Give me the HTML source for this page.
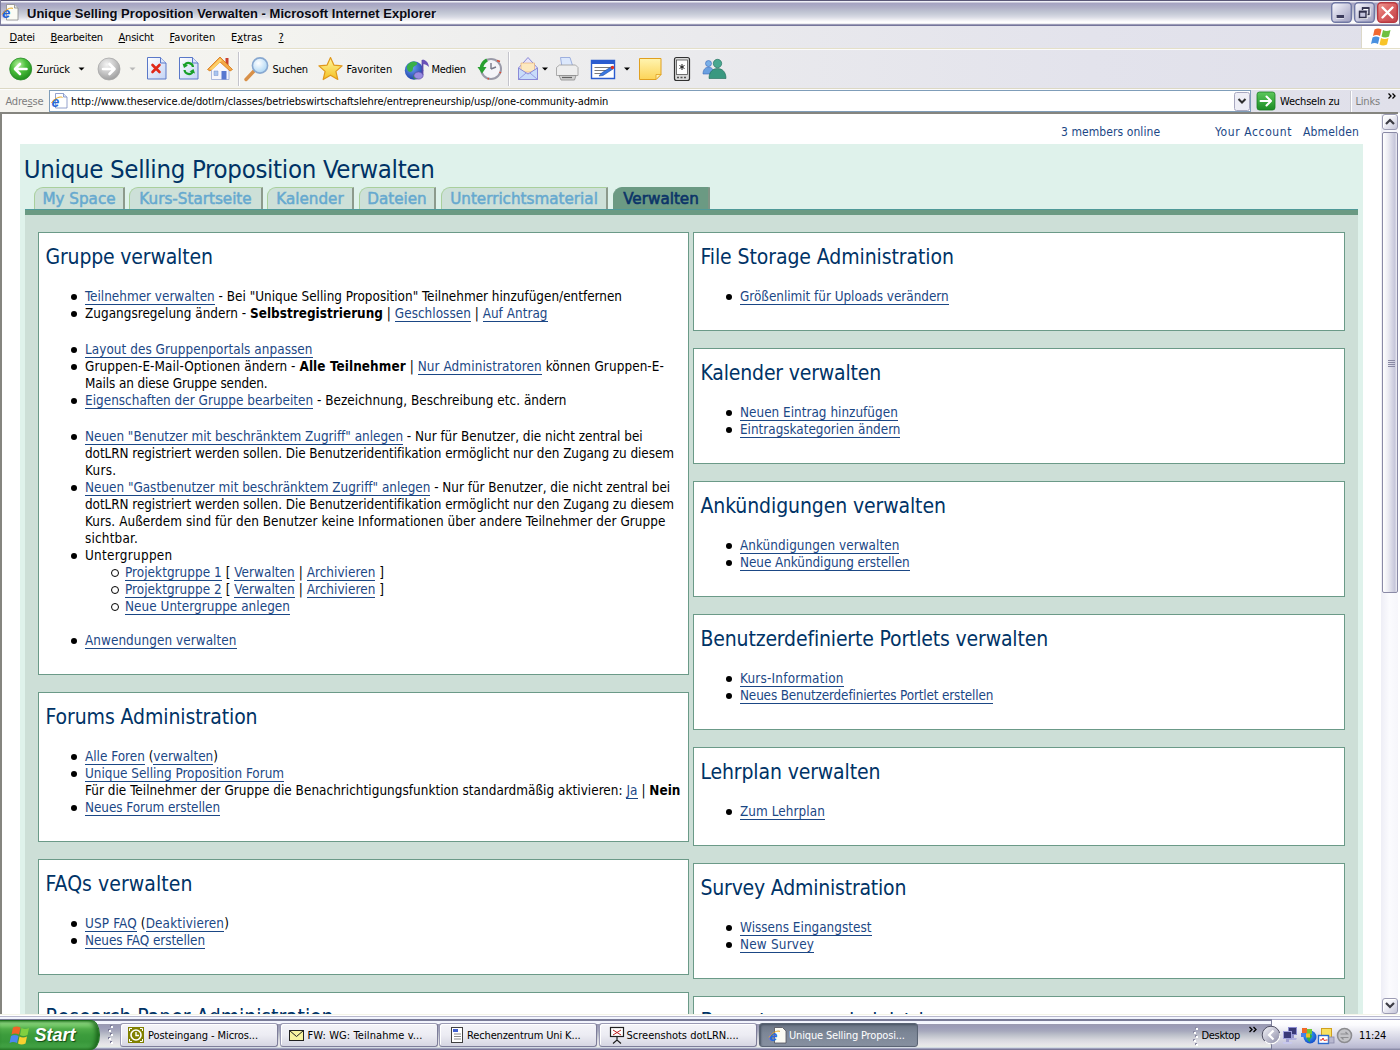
<!DOCTYPE html>
<html lang="de">
<head>
<meta charset="utf-8">
<title>Unique Selling Proposition Verwalten - Microsoft Internet Explorer</title>
<style>
*{box-sizing:border-box}
html,body{margin:0;padding:0}
body{width:1400px;height:1050px;overflow:hidden;position:relative;background:#fff;font-family:"DejaVu Sans Condensed","Liberation Sans",sans-serif;font-size:11px;color:#000}
/* ---------- window chrome ---------- */
.ui{font-family:"DejaVu Sans Condensed","Liberation Sans",sans-serif;font-size:11px;letter-spacing:-.2px;white-space:nowrap;color:#000}
#titlebar{position:absolute;left:0;top:0;width:1400px;height:26px;box-shadow:inset 1px 0 0 #7c7c9c,inset -1px 0 0 #7c7c9c;background:linear-gradient(#5a5878 0,#5a5878 1px,#f0f0f8 1px,#eeeef6 2px,#c4c4d6 2.6px,#a6a4c2 3.5px,#a8a8c4 5px,#b2b2c8 8px,#bcc0d0 11px,#c8ccd8 14px,#d8dae4 17px,#e8e8ee 19px,#f8f8fa 21px,#ffffff 22px,#ffffff 23px,#dcdce2 24px,#9c9cb8 24.500px,#74749a 25px,#74749a 26px)}
#titlebar .t{position:absolute;left:27px;top:5.5px;font:bold 13px/16px "Liberation Sans",sans-serif;color:#0a0a14;white-space:nowrap;letter-spacing:.015px;text-shadow:1px 1px 0 rgba(255,255,255,.5)}
#rebar{position:absolute;left:0;top:26px;width:1400px;height:87px;background:linear-gradient(90deg,#f5f4ef 0,#f3f3ef 20%,#eaeaed 50%,#e3e3ec 78%,#e0e0ea 100%)}
#rebar .mline{position:absolute;left:0;top:22px;width:1400px;height:2px;background:linear-gradient(#e4dfc8 0,#e4dfc8 1px,#fcfcfd 1px,#fcfcfd 2px)}
#rebar .tline{position:absolute;left:0;top:62px;width:1400px;height:2px;background:linear-gradient(#dcd8c4 0,#dcd8c4 1px,#fcfcfd 1px,#fcfcfd 2px)}
#menubar span{position:absolute;top:31px}
#toolbar .lbl{position:absolute;top:63px}
#topicons svg,#taskbar svg{position:absolute;overflow:visible}
#addr .lbl{position:absolute;top:95px}
#addrbox{position:absolute;left:49px;top:90px;width:1202px;height:22px;background:#fff;border:1px solid #7f9db9}
/* ---------- page ---------- */
#view{position:absolute;left:0;top:112px;width:1398px;height:902px;background:#fff;overflow:hidden;border-top:2px solid #85857f}
#view .edgeL{position:absolute;left:0;top:0;width:2px;height:903px;background:#85857f}
#page{position:absolute;left:0;top:0;width:1382px;height:920px;font-family:"DejaVu Sans Condensed","Liberation Sans",sans-serif;font-size:13.4px;line-height:17px;color:#000}
#hdr a{position:absolute;top:10px;font-size:12px;color:#1b4785;white-space:nowrap}
#lt{position:absolute;left:20px;top:30px;width:1343px;height:900px;background:#dff2eb}
#ptitle{position:absolute;left:23.8px;top:38.9px;font-size:25.6px;letter-spacing:-.33px;line-height:32px;color:#003366;white-space:nowrap}
.tab{position:absolute;top:72.5px;height:23.5px;-webkit-text-stroke:.5px #66a9cf;background:#cde0d8;border-left:1px solid #a9cf9c;border-top:1px solid #a9cf9c;border-right:2px solid #8c9a8c;border-radius:9px 0 0 0;font-family:"DejaVu Sans","Liberation Sans",sans-serif;font-size:15.2px;line-height:22.5px;color:#66a9cf;text-align:center;white-space:nowrap}
.tab.on{background:#6b9a83;color:#0b3468;border-color:#6b9a83;border-right-color:#7f9384;font-weight:normal;-webkit-text-stroke:.6px #0b3468}
#bar{position:absolute;left:25px;top:95px;width:1333px;height:6px;background:#6b9a83;border-top:1px solid #4f9a98}
#mid{position:absolute;left:25px;top:101px;width:1333px;height:820px;background:#cddfd7}
.box{position:absolute;background:#fff;border:1px solid #6b9a88}
.box h2{position:absolute;left:6.5px;top:11px;margin:0;font-weight:normal;font-size:21px;line-height:26px;color:#003366;white-space:nowrap}
.box ul{position:absolute;left:46px;top:55px;margin:0;padding:0;list-style:none;white-space:nowrap}
.box li{position:relative;margin:0;padding:0}
.box li:before{content:"";position:absolute;left:-14px;top:6px;width:6px;height:6px;border-radius:3px;background:#000}
.box li li:before{left:-14px;top:5px;width:6px;height:6px;border-radius:4px;background:#fff;border:1px solid #000}
.box ul ul{position:static;margin:0 0 0 40px}
.box a{color:#1b4785;text-decoration:none;border-bottom:1px solid #1b4785;padding-bottom:0}
.gap{margin-top:19px !important}
.gap2{margin-top:17px !important}
/* ---------- scrollbar ---------- */
#sb{position:absolute;left:1381px;top:0;width:17px;height:900px;background:linear-gradient(90deg,#eeeef6,#fbfbfe 50%,#f6f6fb)}
#sb .b{position:absolute;left:1px;width:16px;height:16px;border:1px solid #9c9cb4;border-radius:3px;background:linear-gradient(135deg,#ffffff 0,#f2f2f8 40%,#c4c4d8 100%);box-shadow:inset 1px 1px 0 #fff}
#sb .th{position:absolute;left:1px;top:18px;width:16px;height:461px;border:1px solid #8a8aa6;border-radius:2px;background:linear-gradient(90deg,#ffffff 0,#ececf3 35%,#c6c6da 85%,#f0f0f6 100%)}
#sb .gr{position:absolute;left:5px;top:227px;width:7px;height:7px;background:repeating-linear-gradient(#8a8aa4 0,#8a8aa4 1px,transparent 1px,transparent 2px)}
#sb svg{position:absolute;left:0;top:0}
/* ---------- taskbar ---------- */
#taskbar{position:absolute;left:0;top:1014px;width:1400px;height:36px;background:linear-gradient(#f4f4e8 0,#f4f4e8 1px,#ffffff 1px,#ffffff 2px,#b8b8cc 2px,#b8b8cc 3px,#f6f8ff 3px,#eef0fb 5px,#7a7c98 5.5px,#7a7c98 6.5px,#f0f2fc 7px,#f6f8ff 9.5px,#9a9ab2 10.5px,#9c9cb8 13px,#a6a8bc 17px,#bcc0ca 21px,#d8d8de 26px,#e6e4e8 30px,#e8ece6 33px,#c0c8e0 34px,#7c7898 35px,#7c7898 36px)}
#tray{position:absolute;left:1271px;top:5px;width:129px;height:31px;border-left:1px solid #7a7c98;background:linear-gradient(#a8a8c8 0,#a8a8c8 1px,#ffffff 1px,#fbfbfe 6px,#e4e4ee 14px,#c8c8dc 24px,#b8b8d0 29px,#9090ac 30px,#8888a4 31px)}
#start{position:absolute;left:0;top:6px;width:100px;height:30px;border-radius:0 9px 9px 0/0 15px 15px 0;border-top:1px solid #1e701e;border-right:1px solid #1e701e;background:linear-gradient(#58b050 0,#8cd680 2px,#78cc6c 4px,#4eac48 8px,#3c9c3c 14px,#38983a 21px,#44a446 26px,#2e842e 30px);box-shadow:inset -3px 0 4px rgba(16,84,16,.75)}
#start b{position:absolute;left:34.5px;top:4px;font:italic bold 18px/20px "Liberation Sans",sans-serif;color:#fff;letter-spacing:0;text-shadow:1px 1px 1px rgba(0,40,0,.7)}
.tb{position:absolute;top:9px;width:158px;height:24px;border:1px solid #9a9ab4;border-right-color:#7e7e9a;border-bottom-color:#7e7e9a;border-radius:3px;background:linear-gradient(#f4f4f9 0,#ececf3 50%,#d6d6e2 100%);box-shadow:inset 1px 1px 0 #fff}
.tb span{position:absolute;left:27px;top:5px}
.tb.on span{left:29px}
.tb.on{background:linear-gradient(#6a7484 0,#7c8696 40%,#8690a0 100%);border-color:#5a6474;box-shadow:inset 1px 1px 2px #4a5464;color:#fff}
#taskbar .txt{position:absolute}
</style>
</head>
<body>
<div id="titlebar"><span class="t">Unique Selling Proposition Verwalten - Microsoft Internet Explorer</span>
</div>
<div id="rebar"><div class="mline"></div><div class="tline"></div></div>
<div id="menubar" class="ui">
<span style="left:9.5px"><u>D</u>atei</span>
<span style="left:50.5px"><u>B</u>earbeiten</span>
<span style="left:118.5px"><u>A</u>nsicht</span>
<span style="left:169.5px;letter-spacing:0"><u>F</u>avoriten</span>
<span style="left:231px;letter-spacing:0">E<u>x</u>tras</span>
<span style="left:278.5px"><u>?</u></span>
</div>
<div id="toolbar" class="ui">
<span class="lbl" style="left:36.5px">Zurück</span>
<span class="lbl" style="left:272.5px">Suchen</span>
<span class="lbl" style="left:346.5px;letter-spacing:0">Favoriten</span>
<span class="lbl" style="left:431.5px;letter-spacing:-.3px">Medien</span>
</div>
<div id="addr" class="ui">
<span class="lbl" style="left:5.5px;color:#7d7d7d">Adre<u>s</u>se</span>
<div id="addrbox"></div>
<span class="lbl" style="left:71px;letter-spacing:-.095px">http://www.theservice.de/dotlrn/classes/betriebswirtschaftslehre/entrepreneurship/usp//one-community-admin</span>
<span class="lbl" style="left:1280px">Wechseln zu</span>
<span class="lbl" style="left:1355.5px;color:#7d7d7d">Links</span>
</div>

<div id="topicons" style="position:absolute;left:0;top:0;width:1400px;height:113px"><svg style="left:0;top:0" width="1400" height="113" viewBox="0 0 1400 113">
<defs>
<radialGradient id="gGreen" cx="40%" cy="30%" r="75%"><stop offset="0" stop-color="#b8f0a0"/><stop offset=".45" stop-color="#4cc03c"/><stop offset="1" stop-color="#1c8a1c"/></radialGradient>
<radialGradient id="gGray" cx="40%" cy="30%" r="75%"><stop offset="0" stop-color="#f4f4f4"/><stop offset=".5" stop-color="#c8c8c8"/><stop offset="1" stop-color="#9a9a9a"/></radialGradient>
<linearGradient id="gPage" x1="0" y1="0" x2="1" y2="1"><stop offset="0" stop-color="#ffffff"/><stop offset="1" stop-color="#c4d4f4"/></linearGradient>
<radialGradient id="gLens" cx="40%" cy="35%" r="70%"><stop offset="0" stop-color="#ffffff"/><stop offset="1" stop-color="#a8d4f4"/></radialGradient>
<linearGradient id="gStar" x1="0" y1="0" x2="0" y2="1"><stop offset="0" stop-color="#fff8a0"/><stop offset="1" stop-color="#f4c020"/></linearGradient>
<radialGradient id="gGlobe" cx="40%" cy="35%" r="70%"><stop offset="0" stop-color="#6aa0f0"/><stop offset="1" stop-color="#1a3ca8"/></radialGradient>
<linearGradient id="gNote" x1="0" y1="0" x2="0" y2="1"><stop offset="0" stop-color="#fff4b0"/><stop offset="1" stop-color="#fcd458"/></linearGradient>
<linearGradient id="gGo" x1="0" y1="0" x2="0" y2="1"><stop offset="0" stop-color="#5cc85c"/><stop offset="1" stop-color="#1c8c24"/></linearGradient>
</defs>
<circle cx="20.7" cy="69" r="11" fill="url(#gGreen)" stroke="#2a8a2a" stroke-width=".8"/>
<path d="M26.5 69H15.5M20 64l-5 5 5 5" fill="none" stroke="#fff" stroke-width="2.6" stroke-linecap="round" stroke-linejoin="round"/>
<path d="M78.5 67.5h6l-3 3z" fill="#000"/>
<circle cx="109" cy="69" r="11" fill="url(#gGray)" stroke="#a8a8a8" stroke-width=".8"/>
<path d="M103 69h11M109.500 64l5 5-5 5" fill="none" stroke="#fff" stroke-width="2.6" stroke-linecap="round" stroke-linejoin="round"/>
<path d="M129.500 67.500h6l-3 3z" fill="#b8b8b8"/>
<path d="M147.500 57.500h13l5.500 5.500v16h-18.500z" fill="url(#gPage)" stroke="#5a78c8" stroke-width="1"/>
<path d="M160.500 57.500v5.500h5.500" fill="#dce6fa" stroke="#5a78c8" stroke-width="1"/>
<path d="M152.500 65l7 7M159.500 65l-7 7" stroke="#e02818" stroke-width="2.600" stroke-linecap="round"/>
<path d="M179.500 57.500h13l5.500 5.500v16h-18.500z" fill="url(#gPage)" stroke="#5a78c8" stroke-width="1"/>
<path d="M192.500 57.500v5.500h5.500" fill="#dce6fa" stroke="#5a78c8" stroke-width="1"/>
<path d="M193 67a4.500 4.500 0 0 0-8.500-1.500" fill="none" stroke="#18a028" stroke-width="2.200"/>
<path d="M182.500 63.500l1.500 4.500 4-2.500z" fill="#18a028"/>
<path d="M184.500 70a4.500 4.500 0 0 0 8.500 1.500" fill="none" stroke="#18a028" stroke-width="2.200"/>
<path d="M195 73.500l-1.500-4.500-4 2.500z" fill="#18a028"/>
<path d="M225.500 58h3v7h-3z" fill="#c84030"/>
<path d="M211.500 68.500l8.500-7.500 9 7.500v11h-17.500z" fill="#f6f6fc" stroke="#98a8d8" stroke-width=".8"/>
<path d="M207.500 69.500l12.500-12.500 12.500 12.500-2.500 1.500-10-9-10 9z" fill="#f4a848" stroke="#d88020" stroke-width=".9" stroke-linejoin="round"/>
<path d="M209.500 69l10.500-10.500 2 2-10 9.500z" fill="#fcd068"/>
<path d="M221.500 79.500v-8.500h5v8.500z" fill="#5878d0"/>
<path d="M214 71h4v4.500h-4z" fill="#a8c4f0" stroke="#7890c8" stroke-width=".5"/>
<path d="M254 71l-8 8.500" stroke="#d89048" stroke-width="3.400" stroke-linecap="round"/>
<circle cx="260" cy="65.500" r="7.600" fill="url(#gLens)" stroke="#88a8d0" stroke-width="1.600"/>
<path d="M330.500 57.500l3.400 7.600 8.200.8-6.200 5.500 1.900 8.100-7.300-4.300-7.300 4.300 1.900-8.100-6.200-5.500 8.200-.8z" fill="url(#gStar)" stroke="#e0981c" stroke-width="1.200" stroke-linejoin="round"/>
<circle cx="414" cy="70.500" r="9.200" fill="url(#gGlobe)"/>
<path d="M407 66c2-4 6-5.500 9-4s0 3.500-2 4.500 0 3.500-2.500 5-5-1.500-4.500-5.500z" fill="#38b048"/>
<path d="M413 76c1-3 5-4 7-2s-2 5.500-6 5z" fill="#30a040"/>
<path d="M422.500 60v15" stroke="#5a48a8" stroke-width="1.800"/>
<path d="M422.500 59.500c3.500.5 6 3 6.500 7.500-2-2-4-3-6.500-3z" fill="#6a50b8"/>
<ellipse cx="418.500" cy="75.500" rx="4.600" ry="3.600" fill="#9a8ce0" stroke="#5a48a8" stroke-width=".7"/>
<circle cx="491" cy="69" r="10" fill="#f4f4f8" stroke="#9a9aa8" stroke-width="2"/>
<path d="M491 69v-6M491 69l5-2" stroke="#787888" stroke-width="1.400" fill="none"/>
<path d="M497 60.500l3 1M499.500 72l1.500 1M488 78l.5 1.500" stroke="#e04830" stroke-width="1.400"/>
<path d="M487 60a10 10 0 0 0-5.500 8" fill="none" stroke="#28a030" stroke-width="3.600"/>
<path d="M477.500 67h9l-4.500 6.500z" fill="#28a030"/>
<path d="M518.500 68l9.500-10.500 9.500 10.500v11.500h-19z" fill="#e8e4fa" stroke="#8a8ad8" stroke-width="1"/>
<path d="M521 63h13.500v9h-13.500z" fill="#fce8c0" stroke="#e8a868" stroke-width=".6"/>
<path d="M518.500 68l9.500 6 9.500-6v11.500h-19z" fill="#c8dcfa" stroke="#8a8ad8" stroke-width="1"/>
<path d="M518.500 79.500l7.500-6.500M537.500 79.500l-7.500-6.500" stroke="#8a8ad8" stroke-width=".8"/>
<path d="M542 67.500h6l-3 3z" fill="#000"/>
<path d="M560.500 57.500h9.500l3 9.500h-11z" fill="#dce8fc" stroke="#8aa0d8" stroke-width=".8"/>
<path d="M556.500 67.500l3-2.500h16l2.500 2.500v8h-21.500z" fill="#eeeeee" stroke="#9a9a9a" stroke-width=".8"/>
<path d="M559 75.500h17l-1.500 4.500h-13.500z" fill="#d0d0d0" stroke="#8a8a8a" stroke-width=".8"/>
<path d="M562 77.500h10" stroke="#606060" stroke-width="1.200"/>
<path d="M591.500 60.500h23v18h-23z" fill="#fff" stroke="#2a5cd0" stroke-width="1.400"/>
<path d="M591.500 60.500h23v3.500h-23z" fill="#2a5cd0"/>
<path d="M594.500 67.500h16M594.500 70.500h16M594.500 73.500h9" stroke="#7a7a7a" stroke-width="1"/>
<path d="M599 76l2.500-3 10-6.500 1.500 2.500-10 6.500z" fill="#3a78e0" stroke="#2050a8" stroke-width=".6"/>
<circle cx="612.500" cy="67.500" r="1.700" fill="#e03020"/>
<path d="M624 67.500h6l-3 3z" fill="#000"/>
<path d="M639.500 58.500h21.500v16l-5 5h-16.500z" fill="url(#gNote)" stroke="#e0a020" stroke-width="1"/>
<path d="M661 74.500h-5v5z" fill="#fff0b0" stroke="#e0a020" stroke-width=".8"/>
<rect x="674.500" y="57.500" width="15" height="23" rx="2" fill="#d8d8d8" stroke="#303030" stroke-width="1.200"/>
<rect x="676.500" y="60" width="11" height="14.500" fill="#fff" stroke="#505050" stroke-width=".8"/>
<path d="M682 64v6M679.500 65.500l5 3M684.500 65.500l-5 3" stroke="#202020" stroke-width="1"/>
<path d="M677 77.500h10" stroke="#505050" stroke-width="1.600" stroke-dasharray="2 1.500"/>
<circle cx="708.500" cy="63.500" r="3" fill="#7ab0e8" stroke="#3a68b8" stroke-width=".6"/>
<path d="M703 74c0-5 3-7 5.500-7s5.500 2 5.500 7z" fill="#6aa0e0" stroke="#3a68b8" stroke-width=".6"/>
<circle cx="717.500" cy="63.500" r="4.200" fill="#48a890" stroke="#1c6858" stroke-width=".6"/>
<path d="M709 78.500c0-7 4-10 8.500-10s8.500 3 8.500 10z" fill="#3a9880" stroke="#1c6858" stroke-width=".6"/>
<path d="M55.500 93.500h8l3.500 3.500v11h-11.500z" fill="#fff" stroke="#7a8cc0" stroke-width=".8"/>
<path d="M63.500 93.500v3.500h3.500" fill="#dce6fa" stroke="#7a8cc0" stroke-width=".8"/>
<text x="51.500" y="107" font-family="Liberation Sans,sans-serif" font-weight="bold" font-style="italic" font-size="14" fill="#2868d8">e</text>
<path d="M51.500 103c3-5 9-7 11-5.500" fill="none" stroke="#e8a820" stroke-width="1"/>
<rect x="1234.500" y="92.500" width="15" height="18" rx="2" fill="#eeeef6" stroke="#a8a8c0" stroke-width="1"/>
<path d="M1238.500 99l3.500 3.500 3.500-3.500" fill="none" stroke="#303030" stroke-width="2"/>
<rect x="1257" y="92" width="18" height="18" rx="2.500" fill="url(#gGo)" stroke="#1c7c24" stroke-width=".8"/>
<path d="M1260.500 101h10M1266.500 96.500l4.500 4.500-4.500 4.500" fill="none" stroke="#fff" stroke-width="2" stroke-linecap="round" stroke-linejoin="round"/>
<path d="M1350.500 91v21" stroke="#c8c8d0" stroke-width="1"/><path d="M1351.500 91v21" stroke="#fff" stroke-width="1"/>
<path d="M1388.500 93.500l2.500 2.500-2.500 2.500M1392.500 93.500l2.500 2.500-2.500 2.500" fill="none" stroke="#000" stroke-width="1.300"/>
<path d="M238.500 52v34M508.500 52v34" stroke="#c4c4cc" stroke-width="1"/><path d="M239.500 52v34M509.500 52v34" stroke="#fff" stroke-width="1"/>
<rect x="1361" y="26" width="39" height="22" fill="#fff"/>
<path d="M1361.500 26v22" stroke="#dcd8c8" stroke-width="1"/>
<path d="M1374.500 29.500q3.500-2 7 0l-1.500 6.500q-3.500-2-7 0z" fill="#f06830"/>
<path d="M1383 30q3.500 2 7.500 0l-1.500 6.500q-4 2-7.500 0z" fill="#70c040"/>
<path d="M1372.500 37.500q3.500-2 7 0l-1.500 6.500q-3.500-2-7 0z" fill="#4890e0"/>
<path d="M1381 38q3.500 2 7.500 0l-1.500 6.500q-4 2-7.500 0z" fill="#f8c428"/>
<path d="M6.500 4.500h8l3.500 3.500v12h-11.500z" fill="#fbfbf4" stroke="#8a8a8a" stroke-width=".8"/>
<path d="M14.500 4.500v3.500h3.500" fill="#e4e4e4" stroke="#8a8a8a" stroke-width=".8"/>
<text x="2" y="18" font-family="Liberation Sans,sans-serif" font-weight="bold" font-style="italic" font-size="15" fill="#2060d8">e</text>
<path d="M2 14.500c3-5 9-7.500 11-6" fill="none" stroke="#e8a820" stroke-width="1"/>
<rect x="1331.700" y="2.700" width="19.600" height="19.600" rx="3.500" fill="url(#gWb)" stroke="#7078a4" stroke-width="1.400"/>
<rect x="1354.700" y="2.700" width="19.600" height="19.600" rx="3.500" fill="url(#gWb)" stroke="#7078a4" stroke-width="1.400"/>
<rect x="1377.700" y="2.700" width="19.600" height="19.600" rx="3.500" fill="url(#gWc)" stroke="#b83840" stroke-width="1.400"/>
<path d="M1336 15.500h8v3h-8z" fill="#fff"/><path d="M1336.500 15h7.500v3h-7.500z" fill="#3c3c5c"/>
<path d="M1362.500 8.500h6.500v6.500h-2" fill="none" stroke="#fff" stroke-width="1.400" transform="translate(.8 .8)"/>
<path d="M1362.500 10v-2h6.500v6.500h-2" fill="none" stroke="#30304c" stroke-width="1.400"/><path d="M1362 8h7" stroke="#30304c" stroke-width="1.600"/>
<path d="M1359.500 11.500h6.500v6h-6.500z" fill="none" stroke="#fff" stroke-width="1.400" transform="translate(.8 .8)"/>
<path d="M1359.500 11.500h6.500v6h-6.500z" fill="#c4c4dc" stroke="#30304c" stroke-width="1.400"/><path d="M1359 11.700h7.500" stroke="#30304c" stroke-width="1.800"/>
<path d="M1382.500 7.500l10 10M1392.500 7.500l-10 10" stroke="#fff" stroke-width="2.400" stroke-linecap="round"/>
<defs>
<linearGradient id="gWb" x1="0" y1="0" x2="1" y2="1"><stop offset="0" stop-color="#fafafe"/><stop offset=".45" stop-color="#d0d0e2"/><stop offset="1" stop-color="#9c9cbe"/></linearGradient>
<linearGradient id="gWc" x1="0" y1="0" x2="1" y2="1"><stop offset="0" stop-color="#f09c94"/><stop offset=".45" stop-color="#dc6464"/><stop offset="1" stop-color="#c04048"/></linearGradient>
</defs>
</svg>
</div>
<div id="view">
<div id="page">
<div id="hdr">
<a style="left:1061px;letter-spacing:.08px">3 members online</a>
<a style="left:1215px;letter-spacing:.6px">Your Account</a>
<a style="left:1303px;letter-spacing:.15px">Abmelden</a>
</div>
<div id="lt"></div>
<div id="ptitle">Unique Selling Proposition Verwalten</div>
<div class="tab" style="left:34px;width:91px">My Space</div>
<div class="tab" style="left:129px;width:134px">Kurs-Startseite</div>
<div class="tab" style="left:267px;width:87px">Kalender</div>
<div class="tab" style="left:359px;width:77px">Dateien</div>
<div class="tab" style="left:441px;width:167px">Unterrichtsmaterial</div>
<div class="tab on" style="left:613px;width:97px">Verwalten</div>
<div id="bar"></div>
<div id="mid"></div>
<div class="box" style="left:38px;top:118px;width:651px;height:443px">
<h2 style="letter-spacing:-0.166px">Gruppe verwalten</h2>
<ul>
<li><span class="l" style="letter-spacing:0.005px"><a>Teilnehmer verwalten</a> - Bei "Unique Selling Proposition" Teilnehmer hinzufügen/entfernen</span></li>
<li><span class="l" style="letter-spacing:0.035px">Zugangsregelung ändern - <b>Selbstregistrierung</b> | <a>Geschlossen</a> | <a>Auf Antrag</a></span></li>
<li class="gap"><span class="l" style="letter-spacing:0.062px"><a>Layout des Gruppenportals anpassen</a></span></li>
<li><span class="l" style="letter-spacing:0.096px">Gruppen-E-Mail-Optionen ändern - <b>Alle Teilnehmer</b> | <a>Nur Administratoren</a> können Gruppen-E-</span><br><span class="l" style="letter-spacing:-0.109px">Mails an diese Gruppe senden.</span></li>
<li><span class="l" style="letter-spacing:0.031px"><a>Eigenschaften der Gruppe bearbeiten</a> - Bezeichnung, Beschreibung etc. ändern</span></li>
<li class="gap"><span class="l" style="letter-spacing:-0.013px"><a>Neuen "Benutzer mit beschränktem Zugriff" anlegen</a> - Nur für Benutzer, die nicht zentral bei</span><br><span class="l" style="letter-spacing:-0.053px">dotLRN registriert werden sollen. Die Benutzeridentifikation ermöglicht nur den Zugang zu diesem</span><br><span class="l" style="letter-spacing:0.300px">Kurs.</span></li>
<li><span class="l" style="letter-spacing:-0.008px"><a>Neuen "Gastbenutzer mit beschränktem Zugriff" anlegen</a> - Nur für Benutzer, die nicht zentral bei</span><br><span class="l" style="letter-spacing:-0.053px">dotLRN registriert werden sollen. Die Benutzeridentifikation ermöglicht nur den Zugang zu diesem</span><br><span class="l" style="letter-spacing:0.066px">Kurs. Außerdem sind für den Benutzer keine Informationen über andere Teilnehmer der Gruppe</span><br><span class="l" style="letter-spacing:0.201px">sichtbar.</span></li>
<li><span class="l" style="letter-spacing:0.300px">Untergruppen</span>
<ul>
<li><span class="l" style="letter-spacing:0.056px"><a>Projektgruppe 1</a> [ <a>Verwalten</a> | <a>Archivieren</a> ]</span></li>
<li><span class="l" style="letter-spacing:0.056px"><a>Projektgruppe 2</a> [ <a>Verwalten</a> | <a>Archivieren</a> ]</span></li>
<li><span class="l" style="letter-spacing:0.047px"><a>Neue Untergruppe anlegen</a></span></li>
</ul>
</li>
<li class="gap2"><span class="l" style="letter-spacing:0.068px"><a>Anwendungen verwalten</a></span></li>
</ul>
</div>
<div class="box" style="left:38px;top:578px;width:651px;height:150px">
<h2 style="letter-spacing:-0.089px">Forums Administration</h2>
<ul>
<li><span class="l" style="letter-spacing:0.009px"><a>Alle Foren</a> (<a>verwalten</a>)</span></li>
<li><span class="l" style="letter-spacing:-0.009px"><a>Unique Selling Proposition Forum</a></span><br><span class="l" style="letter-spacing:0.042px">Für die Teilnehmer der Gruppe die Benachrichtigungsfunktion standardmäßig aktivieren: <a>Ja</a> | <b>Nein</b></span></li>
<li><span class="l" style="letter-spacing:-0.051px"><a>Neues Forum erstellen</a></span></li>
</ul>
</div>
<div class="box" style="left:38px;top:745px;width:651px;height:116px">
<h2 style="letter-spacing:0.067px">FAQs verwalten</h2>
<ul>
<li><span class="l" style="letter-spacing:0.150px"><a>USP FAQ</a> (<a>Deaktivieren</a>)</span></li>
<li><span class="l" style="letter-spacing:-0.059px"><a>Neues FAQ erstellen</a></span></li>
</ul>
</div>
<div class="box" style="left:38px;top:878px;width:651px;height:116px">
<h2 style="letter-spacing:-0.074px">Research Paper Administration</h2>
</div>
<div class="box" style="left:693px;top:118px;width:652px;height:99px">
<h2 style="letter-spacing:-0.085px">File Storage Administration</h2>
<ul>
<li><span class="l" style="letter-spacing:-0.019px"><a>Größenlimit für Uploads verändern</a></span></li>
</ul>
</div>
<div class="box" style="left:693px;top:234px;width:652px;height:116px">
<h2 style="letter-spacing:-0.178px">Kalender verwalten</h2>
<ul>
<li><span class="l" style="letter-spacing:0.024px"><a>Neuen Eintrag hinzufügen</a></span></li>
<li><span class="l" style="letter-spacing:0.001px"><a>Eintragskategorien ändern</a></span></li>
</ul>
</div>
<div class="box" style="left:693px;top:367px;width:652px;height:116px">
<h2 style="letter-spacing:-0.109px">Ankündigungen verwalten</h2>
<ul>
<li><span class="l" style="letter-spacing:0.060px"><a>Ankündigungen verwalten</a></span></li>
<li><span class="l" style="letter-spacing:-0.051px"><a>Neue Ankündigung erstellen</a></span></li>
</ul>
</div>
<div class="box" style="left:693px;top:500px;width:652px;height:116px">
<h2 style="letter-spacing:-0.160px">Benutzerdefinierte Portlets verwalten</h2>
<ul>
<li><span class="l" style="letter-spacing:0.221px"><a>Kurs-Information</a></span></li>
<li><span class="l" style="letter-spacing:-0.149px"><a>Neues Benutzerdefiniertes Portlet erstellen</a></span></li>
</ul>
</div>
<div class="box" style="left:693px;top:633px;width:652px;height:99px">
<h2 style="letter-spacing:-0.132px">Lehrplan verwalten</h2>
<ul>
<li><span class="l" style="letter-spacing:0.079px"><a>Zum Lehrplan</a></span></li>
</ul>
</div>
<div class="box" style="left:693px;top:749px;width:652px;height:116px">
<h2 style="letter-spacing:-0.201px">Survey Administration</h2>
<ul>
<li><span class="l" style="letter-spacing:0.025px"><a>Wissens Eingangstest</a></span></li>
<li><span class="l" style="letter-spacing:0.218px"><a>New Survey</a></span></li>
</ul>
</div>
<div class="box" style="left:693px;top:882px;width:652px;height:116px">
<h2 style="letter-spacing:-0.178px">Bewertungen administrieren</h2>
</div>
</div>
<div id="sb"><div class="b" style="top:0"></div><div class="th"><div class="gr"></div></div><div class="b" style="top:883.5px"></div>
<svg width="18" height="900" viewBox="0 0 18 900"><path d="M5 10l4-4 4 4" fill="none" stroke="#3c3c44" stroke-width="2.200"/><path d="M5 889l4 4 4-4" fill="none" stroke="#3c3c44" stroke-width="2.200"/></svg></div>
<div class="edgeL"></div>
</div>

<div id="taskbar" class="ui">
<div id="start"><b>Start</b></div>
<div class="tb" style="left:120px"><span style="letter-spacing:-.075px">Posteingang - Micros...</span></div>
<div class="tb" style="left:279.5px"><span style="letter-spacing:.094px">FW: WG: Teilnahme v...</span></div>
<div class="tb" style="left:439px"><span style="letter-spacing:-.134px">Rechenzentrum Uni K...</span></div>
<div class="tb" style="left:598.5px"><span style="letter-spacing:0">Screenshots dotLRN....</span></div>
<div class="tb on" style="left:759px;width:158.500px"><span style="letter-spacing:-.16px">Unique Selling Proposi...</span></div>
<div id="tray"></div>
<span class="txt" style="left:1201.5px;top:15px;letter-spacing:-.33px">Desktop</span>
<span class="txt" style="left:1359px;top:15px;letter-spacing:-.3px">11:24</span>
<svg style="left:0;top:0" width="1400" height="36" viewBox="0 1014 1400 36">
<defs>
<linearGradient id="gRb" x1="0" y1="0" x2="1" y2="1"><stop offset="0" stop-color="#f8f8fc"/><stop offset=".5" stop-color="#c0c0d0"/><stop offset="1" stop-color="#8888a4"/></linearGradient>
<radialGradient id="gGl2" cx="40%" cy="35%" r="70%"><stop offset="0" stop-color="#40b0f8"/><stop offset="1" stop-color="#1048c8"/></radialGradient>
</defs>
<path d="M13 1027.500q3.500-2 7.500 0l-1.500 7q-4-2-7.500 0z" fill="#f06428"/>
<path d="M21.500 1028q3.500 2 7.500 0l-1.500 7q-4 2-7.500 0z" fill="#80d040"/>
<path d="M11 1036q3.500-2 7.500 0l-1.500 7q-4-2-7.500 0z" fill="#4c88f0"/>
<path d="M19.500 1036.500q3.500 2 7.500 0l-1.500 7q-4 2-7.500 0z" fill="#f8d030"/>
<g fill="#7c7c98"><rect x="110" y="1025" width="2" height="2"/><rect x="108" y="1029" width="2" height="2"/><rect x="110" y="1033" width="2" height="2"/><rect x="108" y="1037" width="2" height="2"/><rect x="110" y="1041" width="2" height="2"/></g>
<g fill="#ffffff"><rect x="111" y="1026" width="2" height="2"/><rect x="109" y="1030" width="2" height="2"/><rect x="111" y="1034" width="2" height="2"/><rect x="109" y="1038" width="2" height="2"/><rect x="111" y="1042" width="2" height="2"/></g>
<g fill="#8c8ca4"><rect x="1195" y="1027" width="2" height="2"/><rect x="1193" y="1031" width="2" height="2"/><rect x="1195" y="1035" width="2" height="2"/><rect x="1193" y="1039" width="2" height="2"/><rect x="1195" y="1043" width="2" height="2"/></g>
<g fill="#ffffff"><rect x="1196" y="1028" width="2" height="2"/><rect x="1194" y="1032" width="2" height="2"/><rect x="1196" y="1036" width="2" height="2"/><rect x="1194" y="1040" width="2" height="2"/><rect x="1196" y="1044" width="2" height="2"/></g>
<rect x="128" y="1027" width="16" height="16" fill="#808000"/>
<circle cx="136" cy="1035" r="5" fill="none" stroke="#fff" stroke-width="1.600"/><path d="M136 1032v3.500h3" fill="none" stroke="#fff" stroke-width="1.400"/>
<path d="M129.500 1031v-2.500h2.500M142.500 1031v-2.500h-2.500M129.500 1039v2.500h2.500M142.500 1039v2.500h-2.500" fill="none" stroke="#fff" stroke-width="1"/>
<rect x="289.500" y="1030.500" width="14" height="10" fill="#f8f4a0" stroke="#202020" stroke-width="1"/><path d="M289.500 1030.500l7 6 7-6" fill="none" stroke="#202020" stroke-width="1"/>
<rect x="451.500" y="1027.500" width="11" height="15" fill="#fff" stroke="#404040" stroke-width="1"/><rect x="453" y="1029" width="5" height="3" fill="#4060d0"/><path d="M454 1034h7M454 1036.500h7M454 1039h7" stroke="#8a8a8a" stroke-width="1"/>
<rect x="610.500" y="1027.500" width="13" height="9" fill="#fff" stroke="#202020" stroke-width="1.200"/><path d="M613 1030l8 5M621 1030l-8 5" stroke="#c02020" stroke-width="1"/><path d="M617 1037v3M613 1043.500l4-3.500 4 3.500" fill="none" stroke="#202020" stroke-width="1.200"/>
<path d="M774.500 1027.500h8l3.500 3.500v12h-11.500z" fill="#fbfbf4" stroke="#50505a" stroke-width=".8"/>
<text x="769" y="1041" font-family="Liberation Sans,sans-serif" font-weight="bold" font-style="italic" font-size="15" fill="#2868e0">e</text>
<path d="M769 1037.500c3-5 9-7.500 11-6" fill="none" stroke="#e8a820" stroke-width="1"/>
<path d="M1249.500 1027l2.500 2.500-2.500 2.500M1253.500 1027l2.500 2.500-2.500 2.500" fill="none" stroke="#000" stroke-width="1.300"/>
<circle cx="1271" cy="1035" r="8.800" fill="url(#gRb)" stroke="#505064" stroke-width="1"/>
<path d="M1264.800 1041.200a8.800 8.800 0 0 0 12.400 0a8.800 8.800 0 0 0 2.500-8" fill="none" stroke="#fff" stroke-width="1.200"/>
<path d="M1273.500 1030.500l-4.500 4.500 4.500 4.500" fill="none" stroke="#fff" stroke-width="2.200"/>
<rect x="1288.500" y="1027.500" width="8" height="7" fill="#383878" stroke="#8c8cd0" stroke-width="1"/><path d="M1287 1038h10l-1 2h-8z" fill="#b0b0e0"/><rect x="1291" y="1035" width="3" height="3" fill="#9090c8"/>
<rect x="1283.500" y="1031.500" width="8" height="7" fill="#383878" stroke="#a0a0dc" stroke-width="1"/><path d="M1282.500 1042h10l-1 2h-8z" fill="#c8c8ec"/><rect x="1286" y="1039" width="3" height="3" fill="#a0a0d0"/>
<circle cx="1310" cy="1037" r="6.500" fill="url(#gGl2)"/>
<path d="M1307 1035c2-2 5-1 5 1s-3 3-2 5-4 0-3-6z" fill="#30b040"/>
<path d="M1302 1028h5v5h-5z" fill="#f06828"/><path d="M1307 1029h5v5h-5z" fill="#70c838"/><path d="M1301 1033h4v4h-4z" fill="#4880e8"/><path d="M1306 1033.500h4v4h-4z" fill="#f0c020"/>
<rect x="1321.500" y="1028.500" width="10" height="9" fill="#f8e060" stroke="#d0a020" stroke-width="1"/>
<rect x="1318.500" y="1035.500" width="10" height="8" fill="#fff" stroke="#2868d0" stroke-width="1.400"/><path d="M1320 1040h2l1-2 1.500 3 1-1h2" fill="none" stroke="#e03020" stroke-width="1"/>
<rect x="1329" y="1037" width="5" height="6" fill="#b8b8d0" stroke="#8888a8" stroke-width=".8"/>
<circle cx="1344.500" cy="1035.500" r="7" fill="#c4c4c8" stroke="#8c8c90" stroke-width="1.600"/>
<path d="M1340.500 1034h7l-2-2M1348.500 1037.500h-7l2 2" fill="none" stroke="#909094" stroke-width="1.200"/>
</svg>
</div>
</body>
</html>
